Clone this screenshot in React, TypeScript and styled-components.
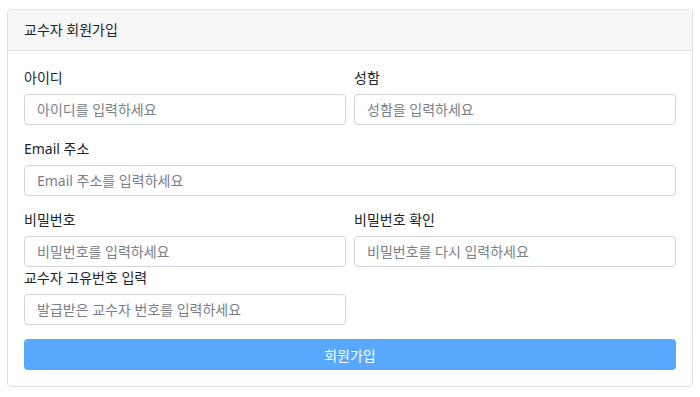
import styled, { createGlobalStyle } from "styled-components";

const GlobalStyle = createGlobalStyle`
    body {
        margin: 0;
        background: #fff;
        font-family: "Noto Sans", "Noto Sans CJK KR", sans-serif;
        color: #212529;
    }
`;

const Page = styled.div`
    padding: 9px 7px;
`;

const Card = styled.div`
    border: 1px solid #dfdfdf;
    border-radius: 4px;
    background: #fff;
`;

const Header = styled.div`
    padding: 9px 16px;
    line-height: 22px;
    font-size: 14px;
    background: #f7f7f7;
    border-bottom: 1px solid #dfdfdf;
    border-radius: 4px 4px 0 0;
`;

const Body = styled.form`
    padding: 16px;
`;

const Row = styled.div<{ $last?: boolean }>`
    display: grid;
    grid-template-columns: 1fr 1fr;
    column-gap: 8px;
    margin-bottom: ${(p) => (p.$last ? "0" : "13px")};
`;

const FullRow = styled.div<{ $last?: boolean }>`
    display: block;
    margin-bottom: ${(p) => (p.$last ? "0" : "13px")};
`;

const Field = styled.div`
    display: flex;
    flex-direction: column;
`;

const HalfField = styled(Field)`
    width: calc(50% - 4px);
`;

const Label = styled.label`
    font-size: 14px;
    line-height: 21px;
    margin-bottom: 6px;
`;

const Input = styled.input`
    box-sizing: border-box;
    height: 31px;
    width: 100%;
    padding: 0 12px;
    border: 1px solid #ced4da;
    border-radius: 4px;
    font-family: inherit;
    font-size: 14px;
    color: #212529;
    outline: none;

    &::placeholder {
        color: #7a8087;
    }
`;

const SubmitButton = styled.button`
    display: block;
    width: 100%;
    height: 31px;
    margin-top: 14px;
    border: none;
    border-radius: 4px;
    background: #58a9fd;
    color: #fff;
    font-family: inherit;
    font-size: 14px;
    cursor: pointer;
`;

const App = () => {
    return (
        <Page>
            <GlobalStyle />
            <Card>
                <Header>교수자 회원가입</Header>
                <Body onSubmit={(e) => e.preventDefault()}>
                    <Row>
                        <Field>
                            <Label>아이디</Label>
                            <Input placeholder="아이디를 입력하세요" />
                        </Field>
                        <Field>
                            <Label>성함</Label>
                            <Input placeholder="성함을 입력하세요" />
                        </Field>
                    </Row>
                    <FullRow>
                        <Field>
                            <Label>Email 주소</Label>
                            <Input type="email" placeholder="Email 주소를 입력하세요" />
                        </Field>
                    </FullRow>
                    <Row $last>
                        <Field>
                            <Label>비밀번호</Label>
                            <Input type="password" placeholder="비밀번호를 입력하세요" />
                        </Field>
                        <Field>
                            <Label>비밀번호 확인</Label>
                            <Input type="password" placeholder="비밀번호를 다시 입력하세요" />
                        </Field>
                    </Row>
                    <FullRow $last>
                        <HalfField>
                            <Label>교수자 고유번호 입력</Label>
                            <Input placeholder="발급받은 교수자 번호를 입력하세요" />
                        </HalfField>
                    </FullRow>
                    <SubmitButton type="submit">회원가입</SubmitButton>
                </Body>
            </Card>
        </Page>
    );
};

export default App;
